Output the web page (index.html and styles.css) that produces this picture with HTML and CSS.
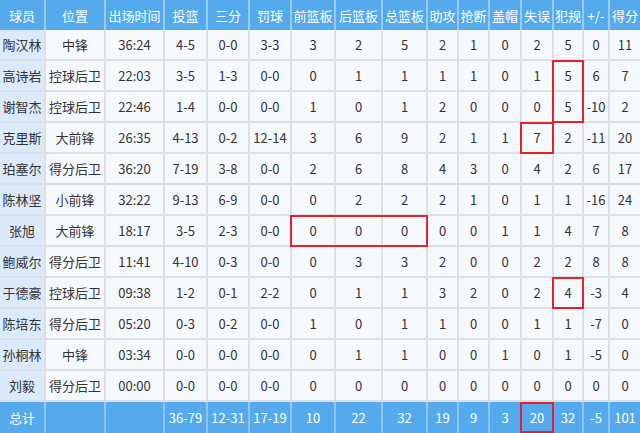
FILE: index.html
```html
<!DOCTYPE html>
<html>
<head>
	<meta charset="utf-8">
	<title>球员数据</title>
	<link rel="stylesheet" href="styles.css">
</head>
<body>
	<table class="stats">
		<colgroup>
			<col style="width:45px"><col style="width:60px"><col style="width:59px"><col style="width:43px">
			<col style="width:42px"><col style="width:42px"><col style="width:44px"><col style="width:47px">
			<col style="width:45px"><col style="width:31px"><col style="width:31px"><col style="width:32px">
			<col style="width:32px"><col style="width:30px"><col style="width:26px"><col style="width:31px">
		</colgroup>
		<thead>
			<tr>
				<th>球员</th><th>位置</th><th>出场时间</th><th>投篮</th><th>三分</th><th>罚球</th><th>前篮板</th><th>后篮板</th>
				<th>总篮板</th><th>助攻</th><th>抢断</th><th>盖帽</th><th>失误</th><th>犯规</th><th>+/-</th><th>得分</th>
			</tr>
		</thead>
		<tbody>
			<tr><td class="name">陶汉林</td><td>中锋</td><td>36:24</td><td>4-5</td><td>0-0</td><td>3-3</td><td>3</td><td>2</td><td>5</td><td>2</td><td>1</td><td>0</td><td>2</td><td>5</td><td>0</td><td>11</td></tr>
			<tr><td class="name">高诗岩</td><td>控球后卫</td><td>22:03</td><td>3-5</td><td>1-3</td><td>0-0</td><td>0</td><td>1</td><td>1</td><td>1</td><td>1</td><td>0</td><td>1</td><td class="mark mark-top">5</td><td>6</td><td>7</td></tr>
			<tr><td class="name">谢智杰</td><td>控球后卫</td><td>22:46</td><td>1-4</td><td>0-0</td><td>0-0</td><td>1</td><td>0</td><td>1</td><td>2</td><td>0</td><td>0</td><td>0</td><td class="mark mark-bottom">5</td><td>-10</td><td>2</td></tr>
			<tr><td class="name">克里斯</td><td>大前锋</td><td>26:35</td><td>4-13</td><td>0-2</td><td>12-14</td><td>3</td><td>6</td><td>9</td><td>2</td><td>1</td><td>1</td><td class="mark">7</td><td>2</td><td>-11</td><td>20</td></tr>
			<tr><td class="name">珀塞尔</td><td>得分后卫</td><td>36:20</td><td>7-19</td><td>3-8</td><td>0-0</td><td>2</td><td>6</td><td>8</td><td>4</td><td>3</td><td>0</td><td>4</td><td>2</td><td>6</td><td>17</td></tr>
			<tr><td class="name">陈林坚</td><td>小前锋</td><td>32:22</td><td>9-13</td><td>6-9</td><td>0-0</td><td>0</td><td>2</td><td>2</td><td>2</td><td>1</td><td>0</td><td>1</td><td>1</td><td>-16</td><td>24</td></tr>
			<tr><td class="name">张旭</td><td>大前锋</td><td>18:17</td><td>3-5</td><td>2-3</td><td>0-0</td><td class="mark mark-left">0</td><td class="mark mark-mid">0</td><td class="mark mark-right">0</td><td>0</td><td>0</td><td>1</td><td>1</td><td>4</td><td>7</td><td>8</td></tr>
			<tr><td class="name">鲍威尔</td><td>得分后卫</td><td>11:41</td><td>4-10</td><td>0-3</td><td>0-0</td><td>0</td><td>3</td><td>3</td><td>2</td><td>0</td><td>0</td><td>2</td><td>2</td><td>8</td><td>8</td></tr>
			<tr><td class="name">于德豪</td><td>控球后卫</td><td>09:38</td><td>1-2</td><td>0-1</td><td>2-2</td><td>0</td><td>1</td><td>1</td><td>3</td><td>2</td><td>0</td><td>2</td><td class="mark">4</td><td>-3</td><td>4</td></tr>
			<tr><td class="name">陈培东</td><td>得分后卫</td><td>05:20</td><td>0-3</td><td>0-2</td><td>0-0</td><td>1</td><td>0</td><td>1</td><td>1</td><td>0</td><td>0</td><td>1</td><td>1</td><td>-7</td><td>0</td></tr>
			<tr><td class="name">孙桐林</td><td>中锋</td><td>03:34</td><td>0-0</td><td>0-0</td><td>0-0</td><td>0</td><td>1</td><td>1</td><td>0</td><td>0</td><td>1</td><td>0</td><td>1</td><td>-5</td><td>0</td></tr>
			<tr><td class="name">刘毅</td><td>得分后卫</td><td>00:00</td><td>0-0</td><td>0-0</td><td>0-0</td><td>0</td><td>0</td><td>0</td><td>0</td><td>0</td><td>0</td><td>0</td><td>0</td><td>0</td><td>0</td></tr>
		</tbody>
		<tfoot>
			<tr><td>总计</td><td></td><td></td><td>36-79</td><td>12-31</td><td>17-19</td><td>10</td><td>22</td><td>32</td><td>19</td><td>9</td><td>3</td><td class="mark">20</td><td>32</td><td>-5</td><td>101</td></tr>
		</tfoot>
	</table>
</body>
</html>
```

FILE: styles.css
```css
body {
	margin: 0;
	background-color: #f6f9fc;
	font-family: "Noto Sans CJK SC", "Noto Sans", sans-serif;
}

.stats {
	width: 640px;
	table-layout: fixed;
	border-collapse: collapse;
	font-size: 13px;
	color: #333;
	text-align: center;
}

.stats th,
.stats td {
	padding: 0;
	white-space: nowrap;
	overflow: visible;
}

.stats th {
	height: 30px;
	background-color: #54aaec;
	color: #fff;
	font-weight: normal;
	border-left: 2px solid #9ccbf1;
}

.stats th:first-child {
	border-left: none;
}

.stats tbody td {
	height: 29px;
	background-color: #f6f9fc;
	border: 2px solid #dcdfe3;
	border-top: none;
}

.stats tbody tr:first-child td {
	border-top: none;
}

.stats tbody td:first-child {
	border-left: none;
}

.stats tbody td:last-child {
	border-right: none;
}

.stats td.name {
	background-color: #dbeafa;
}

.stats tfoot td {
	height: 31px;
	background-color: #54aaec;
	color: #fff;
	border-left: 2px solid #8fc4ef;
}

.stats tfoot td:first-child {
	border-left: none;
}

/* red highlight boxes */
.mark {
	position: relative;
}

.mark::after {
	content: "";
	position: absolute;
	top: -1px;
	bottom: -2px;
	left: -2px;
	right: -2px;
	border: 2px solid #e2232b;
	pointer-events: none;
}

tfoot .mark::after {
	top: 0;
	bottom: 0;
}

.mark-top::after {
	border-bottom: none;
	bottom: -2px;
}

.mark-bottom::after {
	border-top: none;
	top: -2px;
}

.mark-left::after {
	border-right: none;
}

.mark-mid::after {
	border-left: none;
	border-right: none;
}

.mark-right::after {
	border-left: none;
}
```
